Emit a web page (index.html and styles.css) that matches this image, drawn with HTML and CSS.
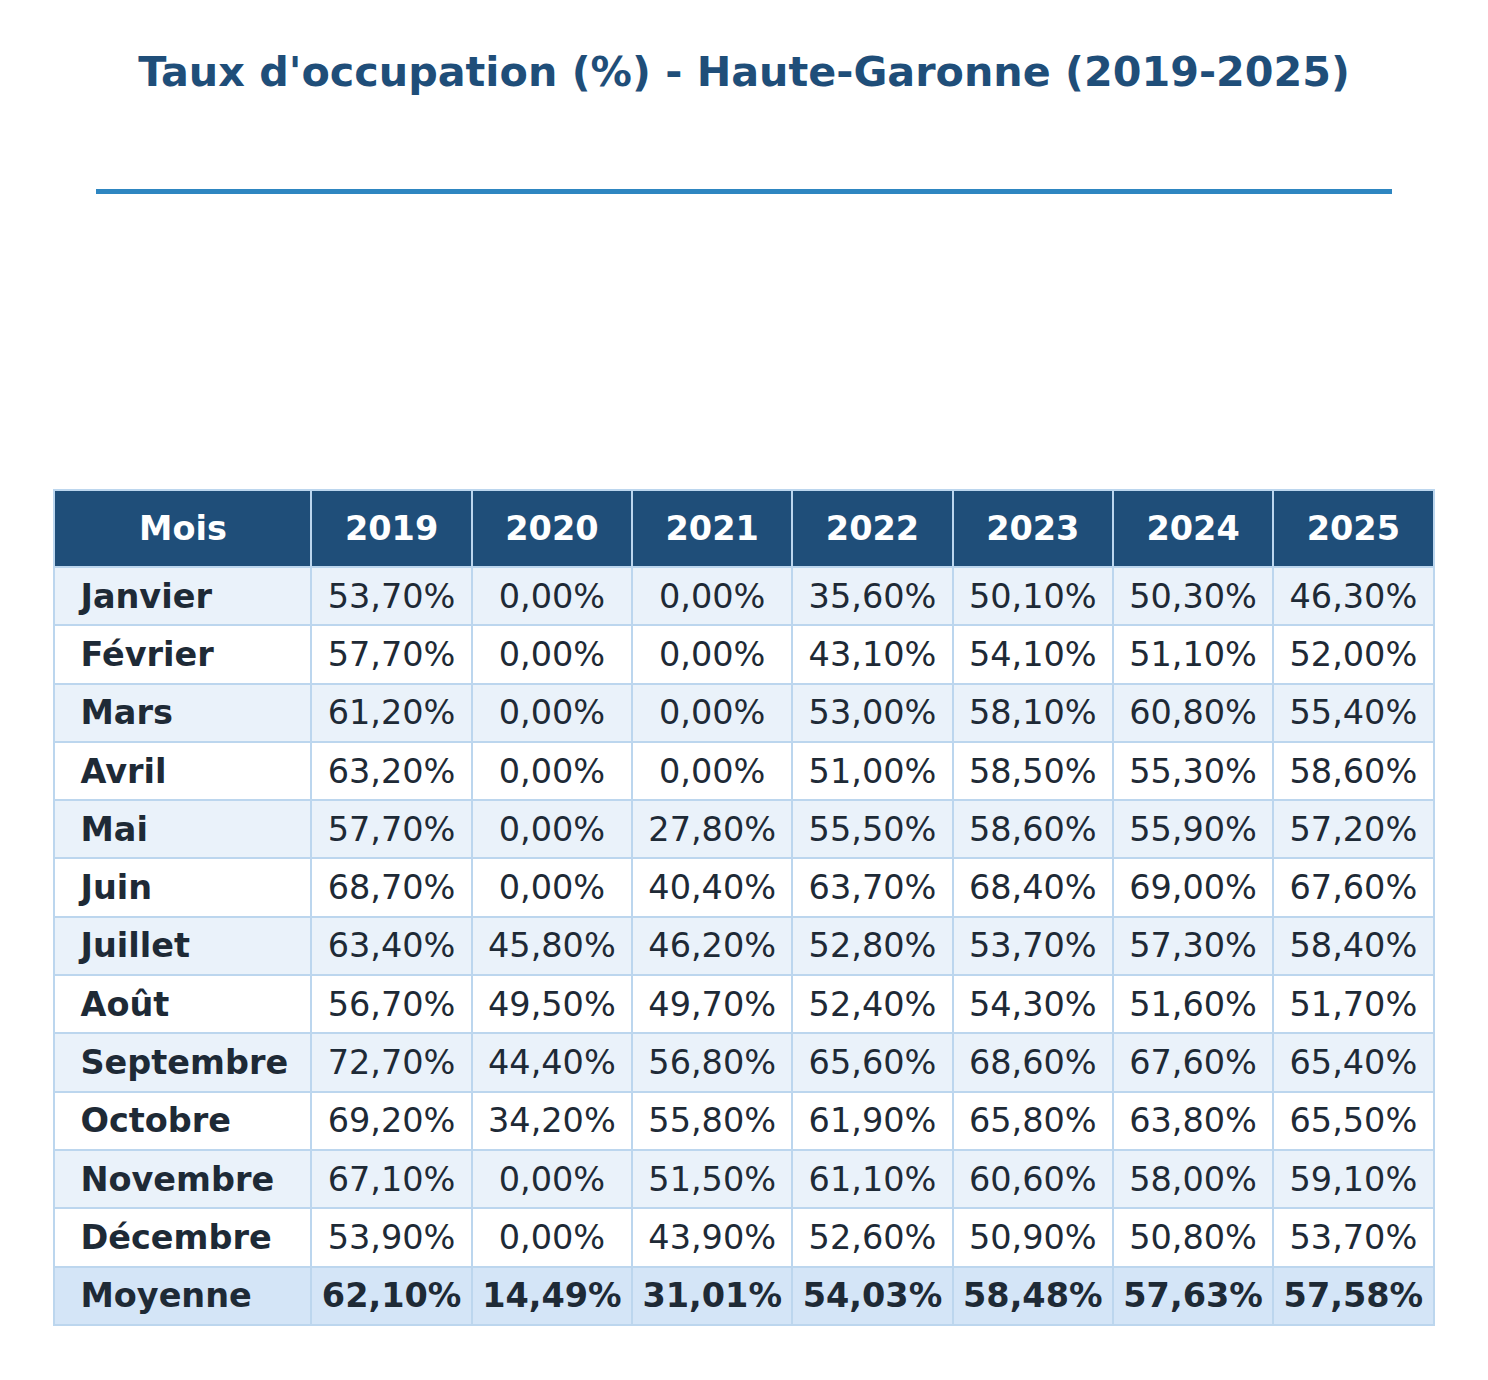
FILE: index.html
```html
<!DOCTYPE html>
<html lang="fr">
<head>
<meta charset="utf-8">
<title>Taux d'occupation</title>
<link rel="stylesheet" href="styles.css">
</head>
<body>
<div class="page">
  <h1 class="title">Taux d'occupation (%) - Haute-Garonne (2019-2025)</h1>
  <div class="rule"></div>
  <table class="grid">
    <colgroup>
      <col class="c-month">
      <col class="c-year"><col class="c-year"><col class="c-year"><col class="c-year"><col class="c-year"><col class="c-year"><col class="c-year">
    </colgroup>
    <thead>
      <tr><th>Mois</th><th>2019</th><th>2020</th><th>2021</th><th>2022</th><th>2023</th><th>2024</th><th>2025</th></tr>
    </thead>
    <tbody>
      <tr class="alt"><td class="m">Janvier</td><td>53,70%</td><td>0,00%</td><td>0,00%</td><td>35,60%</td><td>50,10%</td><td>50,30%</td><td>46,30%</td></tr>
      <tr><td class="m">Février</td><td>57,70%</td><td>0,00%</td><td>0,00%</td><td>43,10%</td><td>54,10%</td><td>51,10%</td><td>52,00%</td></tr>
      <tr class="alt"><td class="m">Mars</td><td>61,20%</td><td>0,00%</td><td>0,00%</td><td>53,00%</td><td>58,10%</td><td>60,80%</td><td>55,40%</td></tr>
      <tr><td class="m">Avril</td><td>63,20%</td><td>0,00%</td><td>0,00%</td><td>51,00%</td><td>58,50%</td><td>55,30%</td><td>58,60%</td></tr>
      <tr class="alt"><td class="m">Mai</td><td>57,70%</td><td>0,00%</td><td>27,80%</td><td>55,50%</td><td>58,60%</td><td>55,90%</td><td>57,20%</td></tr>
      <tr><td class="m">Juin</td><td>68,70%</td><td>0,00%</td><td>40,40%</td><td>63,70%</td><td>68,40%</td><td>69,00%</td><td>67,60%</td></tr>
      <tr class="alt"><td class="m">Juillet</td><td>63,40%</td><td>45,80%</td><td>46,20%</td><td>52,80%</td><td>53,70%</td><td>57,30%</td><td>58,40%</td></tr>
      <tr><td class="m">Août</td><td>56,70%</td><td>49,50%</td><td>49,70%</td><td>52,40%</td><td>54,30%</td><td>51,60%</td><td>51,70%</td></tr>
      <tr class="alt"><td class="m">Septembre</td><td>72,70%</td><td>44,40%</td><td>56,80%</td><td>65,60%</td><td>68,60%</td><td>67,60%</td><td>65,40%</td></tr>
      <tr><td class="m">Octobre</td><td>69,20%</td><td>34,20%</td><td>55,80%</td><td>61,90%</td><td>65,80%</td><td>63,80%</td><td>65,50%</td></tr>
      <tr class="alt"><td class="m">Novembre</td><td>67,10%</td><td>0,00%</td><td>51,50%</td><td>61,10%</td><td>60,60%</td><td>58,00%</td><td>59,10%</td></tr>
      <tr><td class="m">Décembre</td><td>53,90%</td><td>0,00%</td><td>43,90%</td><td>52,60%</td><td>50,90%</td><td>50,80%</td><td>53,70%</td></tr>
      <tr class="avg"><td class="m">Moyenne</td><td>62,10%</td><td>14,49%</td><td>31,01%</td><td>54,03%</td><td>58,48%</td><td>57,63%</td><td>57,58%</td></tr>
    </tbody>
  </table>
</div>
</body>
</html>
```
FILE: styles.css
```css
html, body {
  margin: 0;
  padding: 0;
  background: #ffffff;
}
.page {
  width: 1488px;
  font-family: "DejaVu Sans", "Liberation Sans", sans-serif;
  display: flex;
  flex-direction: column;
  align-items: center;
}
.title {
  margin: 47px 0 0 0;
  font-size: 41.3px;
  line-height: 50px;
  font-weight: bold;
  color: #1f4e79;
  text-align: center;
}
.rule {
  width: 1296px;
  height: 5px;
  background: #2e86c1;
  margin-top: 92px;
}
.grid {
  margin-top: 295px;
  width: 1379px;
  border-collapse: collapse;
  table-layout: fixed;
  font-size: 33.5px;
  color: #1e2a36;
}
.c-month { width: 257px; }
.c-year { width: 160.3px; }
.grid th, .grid td {
  border: 2px solid #bcd6ee;
  padding: 0;
  text-align: center;
  white-space: nowrap;
}
.grid th {
  background: #1f4e79;
  color: #ffffff;
  font-weight: bold;
  height: 75px;
}
.grid td {
  height: 56.3px;
  background: #ffffff;
}
.grid tr.alt td { background: #eaf2fa; }
.grid tr.avg td {
  background: #d4e5f7;
  font-weight: bold;
}
.grid td.m {
  text-align: left;
  padding-left: 25px;
  font-weight: bold;
}
```
